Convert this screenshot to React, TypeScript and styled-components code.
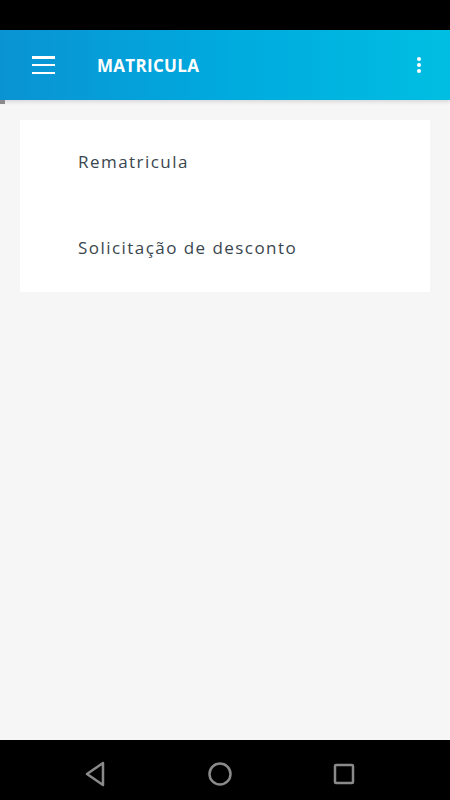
import React from "react";
import styled, { createGlobalStyle } from "styled-components";

const GlobalStyle = createGlobalStyle`
    html, body {
        margin: 0;
        padding: 0;
        background: #f6f6f6;
    }
    * {
        box-sizing: border-box;
    }
`;

const Screen = styled.div`
    width: 450px;
    height: 800px;
    display: flex;
    flex-direction: column;
    background: #f6f6f6;
    font-family: "Open Sans", "Noto Sans", sans-serif;
`;

const StatusBar = styled.div`
    height: 30px;
    background: #000;
    flex-shrink: 0;
`;

const AppBar = styled.header`
    position: relative;
    height: 70px;
    flex-shrink: 0;
    display: flex;
    align-items: center;
    padding: 0 29px 0 32px;
    background: linear-gradient(90deg, #0a93d3 0%, #00aade 50%, #00bee2 100%);
    box-shadow: 0 2px 4px rgba(0, 0, 0, 0.12);
    z-index: 1;
`;

const Scrollbar = styled.span`
    position: absolute;
    left: 0;
    bottom: -4px;
    width: 5px;
    height: 4px;
    background: #8a8a8a;
`;

const MenuButton = styled.button`
    width: 23px;
    height: 18px;
    padding: 0;
    border: none;
    background: none;
    display: flex;
    flex-direction: column;
    justify-content: space-between;
    cursor: pointer;
`;

const MenuLine = styled.span`
    display: block;
    height: 2.5px;
    background: #fff;
`;

const Title = styled.h1`
    margin: 0 0 0 42px;
    flex: 1;
    color: #fff;
    font-size: 17px;
    font-weight: 700;
    letter-spacing: 0.3px;
`;

const Dots = styled.div`
    display: flex;
    flex-direction: column;
    gap: 2px;
`;

const Dot = styled.span`
    width: 4px;
    height: 4px;
    border-radius: 50%;
    background: #fff;
`;

const Content = styled.main`
    flex: 1;
    padding: 20px 20px 0;
`;

const Card = styled.div`
    background: #fff;
    display: flex;
    flex-direction: column;
    padding-bottom: 2px;
`;

const Item = styled.div`
    height: 86px;
    display: flex;
    align-items: center;
    padding-left: 58px;
    color: #3a464e;
    font-size: 17px;
    letter-spacing: 1.45px;
    &:first-child {
        margin-top: -2px;
    }
`;

const NavBar = styled.nav`
    height: 60px;
    flex-shrink: 0;
    background: #000;
    display: flex;
    align-items: center;
    justify-content: space-between;
    padding: 8px 95px 0 84px;
`;

export default function App() {
    return (
        <Screen>
            <GlobalStyle />
            <StatusBar />
            <AppBar>
                <MenuButton>
                    <MenuLine />
                    <MenuLine />
                    <MenuLine />
                </MenuButton>
                <Title>MATRICULA</Title>
                <Dots>
                    <Dot />
                    <Dot />
                    <Dot />
                </Dots>
                <Scrollbar />
            </AppBar>
            <Content>
                <Card>
                    <Item>Rematricula</Item>
                    <Item>Solicitação de desconto</Item>
                </Card>
            </Content>
            <NavBar>
                <svg width="22" height="26" viewBox="0 0 22 26">
                    <path d="M19 2 L3 13 L19 24 Z" fill="none" stroke="#8a8a8a" strokeWidth="2.5" strokeLinejoin="round" />
                </svg>
                <svg width="26" height="26" viewBox="0 0 26 26">
                    <circle cx="13" cy="13" r="10.5" fill="none" stroke="#8a8a8a" strokeWidth="2.5" />
                </svg>
                <svg width="22" height="22" viewBox="0 0 22 22">
                    <rect x="2" y="2" width="18" height="18" rx="1" fill="none" stroke="#8a8a8a" strokeWidth="2.5" />
                </svg>
            </NavBar>
        </Screen>
    );
}
